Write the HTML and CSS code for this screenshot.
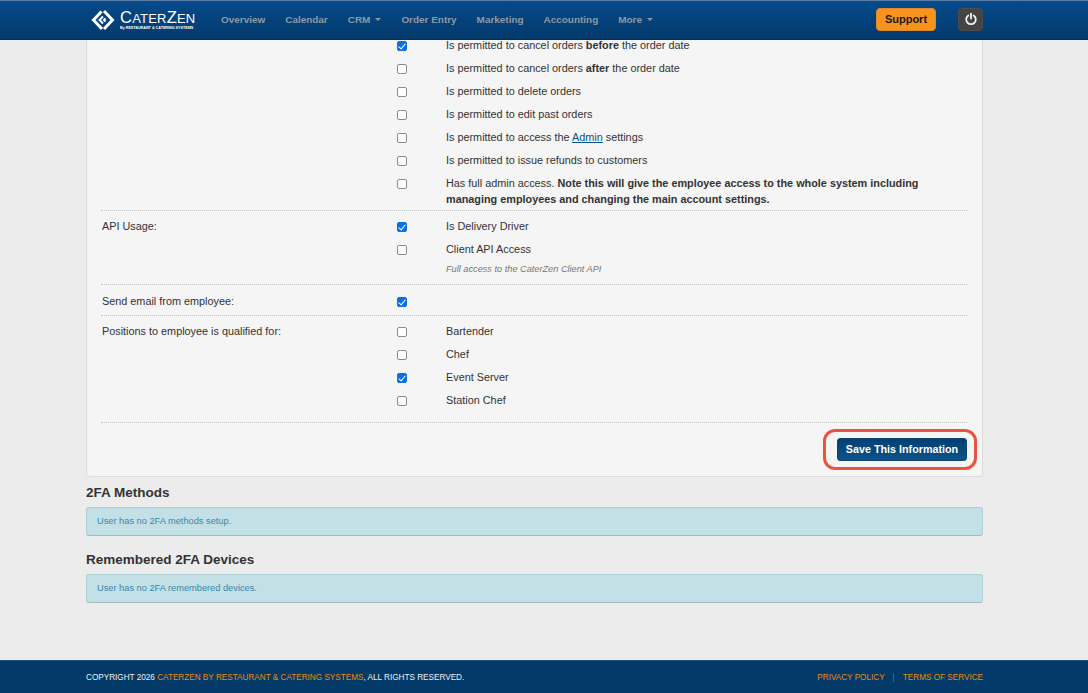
FILE: index.html
```html
<!DOCTYPE html>
<html lang="en">
<head>
    <meta charset="UTF-8">
    <title>Employee</title>
    <link rel="stylesheet" href="styles.css">
</head>
<body>
<!-- top bar -->
<header class="topbar">
    <div class="topbar-inner">
        <a class="logo" href="#">
            <svg class="logo-mark" width="24" height="24" viewBox="0 0 24 24" fill="none" stroke="#fff" stroke-width="3">
                <path d="M10.5 3.5 L2.5 12 L11 21"/>
                <path d="M13 3 L21.5 12 L13 21"/>
                <path d="M12 8.5 L8.5 12 L12 15.5" stroke-width="2"/>
                <path d="M14.5 10.5 L13 12 L14.5 13.5" stroke-width="2"/>
            </svg>
            <span class="logo-text">
                <span class="logo-name"><span class="cap">C</span>ATER<span class="cap">Z</span>EN</span>
                <span class="logo-sub">By RESTAURANT &amp; CATERING SYSTEMS</span>
            </span>
        </a>
        <nav class="nav">
            <a href="#">Overview</a>
            <a href="#">Calendar</a>
            <a href="#" class="drop">CRM</a>
            <a href="#">Order Entry</a>
            <a href="#">Marketing</a>
            <a href="#">Accounting</a>
            <a href="#" class="drop">More</a>
        </nav>
        <a class="btn-support" href="#">Support</a>
        <a class="btn-power" href="#">
            <svg width="14" height="14" viewBox="0 0 14 14" fill="none" stroke="#f2f2f2" stroke-width="1.8" stroke-linecap="round">
                <path d="M4.3 3.4 A4.8 4.8 0 1 0 9.7 3.4"/>
                <path d="M7 1.6 V6.6"/>
            </svg>
        </a>
    </div>
</header>

<main class="main">
    <section class="card">
        <div class="row row-permissions">
            <div class="row-label"></div>
            <div class="row-items">
                <label class="item"><input type="checkbox" checked><span>Is permitted to cancel orders <b>before</b> the order date</span></label>
                <label class="item"><input type="checkbox"><span>Is permitted to cancel orders <b>after</b> the order date</span></label>
                <label class="item"><input type="checkbox"><span>Is permitted to delete orders</span></label>
                <label class="item"><input type="checkbox"><span>Is permitted to edit past orders</span></label>
                <label class="item"><input type="checkbox"><span>Is permitted to access the <a href="#">Admin</a> settings</span></label>
                <label class="item"><input type="checkbox"><span>Is permitted to issue refunds to customers</span></label>
                <label class="item"><input type="checkbox"><span>Has full admin access. <b>Note this will give the employee access to the whole system including managing employees and changing the main account settings.</b></span></label>
            </div>
        </div>
        <div class="row">
            <div class="row-label">API Usage:</div>
            <div class="row-items">
                <label class="item"><input type="checkbox" checked><span>Is Delivery Driver</span></label>
                <label class="item"><input type="checkbox"><span>Client API Access</span></label>
                <p class="help">Full access to the CaterZen Client API</p>
            </div>
        </div>
        <div class="row row-email">
            <div class="row-label">Send email from employee:</div>
            <div class="row-items">
                <label class="item"><input type="checkbox" checked></label>
            </div>
        </div>
        <div class="row row-positions">
            <div class="row-label">Positions to employee is qualified for:</div>
            <div class="row-items">
                <label class="item"><input type="checkbox"><span>Bartender</span></label>
                <label class="item"><input type="checkbox"><span>Chef</span></label>
                <label class="item"><input type="checkbox" checked><span>Event Server</span></label>
                <label class="item"><input type="checkbox"><span>Station Chef</span></label>
            </div>
        </div>
        <div class="actions">
            <div class="highlight">
                <button type="button" class="btn-save">Save This Information</button>
            </div>
        </div>
    </section>

    <h2 class="section-title">2FA Methods</h2>
    <div class="alert">User has no 2FA methods setup.</div>

    <h2 class="section-title">Remembered 2FA Devices</h2>
    <div class="alert">User has no 2FA remembered devices.</div>
</main>

<footer class="footer">
    <div class="copyright">COPYRIGHT 2026 <a href="#">CATERZEN BY RESTAURANT &amp; CATERING SYSTEMS</a>, ALL RIGHTS RESERVED.</div>
    <div class="footer-links">
        <a href="#">PRIVACY POLICY</a>
        <a href="#">TERMS OF SERVICE</a>
    </div>
</footer>
</body>
</html>
```
FILE: styles.css
```css
* {
    box-sizing: border-box;
}
html, body {
    height: 100%;
}
body {
    margin: 0;
    display: flex;
    flex-direction: column;
    height: 693px;
    overflow: hidden;
    background: #ececec;
    color: #333;
    font: 10.85px/16px "Liberation Sans", Arial, sans-serif;
}
a {
    text-decoration: none;
}

/* top bar */
.topbar {
    position: relative;
    z-index: 1;
    height: 40px;
    flex: none;
    background: linear-gradient(#054a8c, #033a6b);
    border-top: 1px solid #5b7fa6;
    border-bottom: 1px solid #1d2a38;
}
.topbar-inner {
    display: flex;
    align-items: center;
    height: 100%;
    padding: 0 105px 0 91px;
}
.logo {
    display: flex;
    align-items: center;
    gap: 5px;
    color: #fff;
    width: 130px;
}
.logo-mark {
    flex: none;
}
.logo-text {
    display: flex;
    flex-direction: column;
}
.logo-name {
    font: 13px/14px "Liberation Sans", Arial, sans-serif;
    letter-spacing: 0.2px;
}
.logo-name .cap {
    font-size: 16.5px;
}
.logo-sub {
    font: bold 3.7px/5px "Liberation Sans", Arial, sans-serif;
    white-space: nowrap;
}
.nav {
    display: flex;
    gap: 20px;
    flex: 1;
    margin-top: -1px;
}
.nav a {
    color: #8e99a6;
    font-weight: bold;
    font-size: 9.95px;
}
.nav .drop::after {
    content: "";
    display: inline-block;
    margin-left: 5px;
    vertical-align: 2px;
    border-top: 3px solid #8e99a6;
    border-left: 3px solid transparent;
    border-right: 3px solid transparent;
}
.btn-support {
    width: 60px;
    height: 23px;
    margin-right: 22px;
    margin-top: -2px;
    background: #f7931e;
    border: 1px solid #d98a2b;
    border-radius: 4px;
    color: #1a1a1a;
    font-weight: bold;
    font-size: 11px;
    line-height: 21px;
    text-align: center;
}
.btn-power {
    display: flex;
    align-items: center;
    justify-content: center;
    width: 25px;
    height: 23px;
    margin-top: -2px;
    background: #444;
    border: 1px solid #4d4d4d;
    border-radius: 4px;
}

/* main */
.main {
    flex: 1;
    padding: 0 105px 0 86px;
}
.card {
    background: #f5f5f5;
    border: 1px solid #dcdcdc;
    border-top: none;
    border-radius: 0 0 4px 4px;
    padding: 0 15px 5px 14px;
    height: 440px;
}
.row {
    display: grid;
    grid-template-columns: 296px 1fr;
    border-bottom: 1px dotted #c4c4c4;
    padding: 7px 0;
}
/* the first row starts behind the top bar, the page is scrolled */
.row-permissions {
    margin-top: -3px;
    padding: 0;
    height: 174px;
}
.row-email {
    padding: 8px 0 6px;
}
.row-positions {
    padding-bottom: 14px;
}
.row-label {
    padding: 0 1px;
}
.row-items {
    display: flex;
    flex-direction: column;
    gap: 7px;
}
.item {
    display: flex;
    align-items: flex-start;
    min-height: 16px;
}
.item input {
    appearance: none;
    position: relative;
    flex: none;
    width: 10px;
    height: 10px;
    margin: 4px 39px 0 0;
    background: #fff;
    border: 1px solid #8c8c8c;
    border-radius: 2px;
}
.item input:checked {
    background: #0b6fe8;
    border-color: #0b6fe8;
}
.item input:checked::after {
    content: "";
    position: absolute;
    left: 2px;
    top: 0;
    width: 3px;
    height: 6px;
    border: solid #fff;
    border-width: 0 1.5px 1.5px 0;
    transform: rotate(40deg);
}
.item a {
    color: #04578a;
    text-decoration: underline;
}
.help {
    margin: -3px 0 0 49px;
    color: #777;
    font-size: 9.2px;
    font-style: italic;
}
.actions {
    display: flex;
    justify-content: flex-end;
    margin-top: 6px;
}
.highlight {
    margin-right: -10px;
    padding: 6px 7px 6px 11px;
    border: 3px solid #e8543f;
    border-radius: 12px;
}
.btn-save {
    display: block;
    width: 130px;
    height: 23px;
    padding: 0;
    background: linear-gradient(#033f72, #0f5286);
    border: 1px solid #0a4679;
    border-radius: 3px;
    color: #fff;
    font: bold 10.75px/21px "Liberation Sans", Arial, sans-serif;
}
.section-title {
    margin: 7px 0 5px;
    font-size: 13.5px;
    line-height: 18px;
    color: #333;
}
.alert {
    height: 29px;
    padding: 0 10px;
    background: #c2e0e5;
    border: 1px solid #aecfd4;
    border-bottom-color: #9fbcc1;
    border-radius: 3px;
    color: #3a87ad;
    font-size: 9.25px;
    line-height: 27px;
}
.alert + .section-title {
    margin: 15px 0 5px;
}

/* footer */
.footer {
    flex: none;
    display: flex;
    justify-content: space-between;
    align-items: center;
    height: 33px;
    padding: 1px 105px 0 86px;
    background: #043a67;
    border-top: 1px solid #1f4f7c;
    color: #f0f0f0;
    font-size: 8.18px;
}
.footer a {
    color: #e88b12;
}
.footer-links a + a {
    margin-left: 6px;
    padding-left: 9px;
    border-left: 1px solid #2f6793;
}
```
